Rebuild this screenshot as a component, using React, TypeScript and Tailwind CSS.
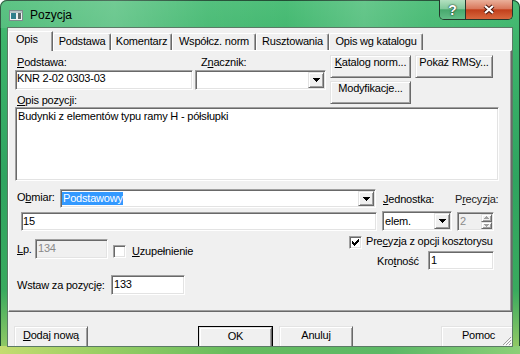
import React from "react";

const sunken =
  "border border-t-[#a0a0a0] border-l-[#a0a0a0] border-r-white border-b-white shadow-[inset_1px_1px_0_#696969,inset_-1px_-1px_0_#e3e3e3]";
const raised =
  "bg-[#f0f0f0] border border-t-[#e3e3e3] border-l-[#e3e3e3] border-r-[#696969] border-b-[#696969] shadow-[inset_1px_1px_0_#ffffff,inset_-1px_-1px_0_#a0a0a0]";

function U({ children }: { children: React.ReactNode }) {
  return <span className="underline underline-offset-1">{children}</span>;
}

function Arrow({ color = "#000" }: { color?: string }) {
  return (
    <svg width="7" height="4" viewBox="0 0 7 4">
      <path d="M0 0H7V1H6V2H5V3H4V4H3V3H2V2H1V1H0Z" fill={color} />
    </svg>
  );
}

function Combo({ className, children }: { className: string; children?: React.ReactNode }) {
  return (
    <div className={`${sunken} bg-white flex items-stretch p-px ${className}`}>
      <div className="flex-1 min-w-0 flex items-start">{children}</div>
      <div className={`${raised} w-[16px] flex items-center justify-center`}>
        <Arrow />
      </div>
    </div>
  );
}

function Btn({
  className,
  isDefault,
  children,
}: {
  className: string;
  isDefault?: boolean;
  children: React.ReactNode;
}) {
  if (isDefault) {
    return (
      <div className={`h-[23px] shrink-0 border border-black ${className}`}>
        <div className={`${raised} h-full flex justify-center items-start pt-px`}>{children}</div>
      </div>
    );
  }
  return (
    <div className={`${raised} h-[23px] shrink-0 flex justify-center items-start ${className}`}>
      {children}
    </div>
  );
}

function Check({ checked, className = "" }: { checked?: boolean; className?: string }) {
  return (
    <div className={`${sunken} bg-white w-[13px] h-[13px] shrink-0 flex items-center justify-center ${className}`}>
      {checked && (
        <svg width="7" height="7" viewBox="0 0 7 7">
          <path
            d="M6 0H7V3H6V4H5V5H4V6H3V7H2V6H1V5H0V2H1V3H2V4H3V3H4V2H5V1H6Z"
            fill="#000"
          />
        </svg>
      )}
    </div>
  );
}

export default function App() {
  return (
    <div className="w-[520px] h-[354px] relative overflow-hidden rounded-t-[7px] flex flex-col font-['Liberation_Sans',Arial,sans-serif] text-[11px] leading-[13px] tracking-[-0.2px] text-black bg-[linear-gradient(180deg,#4abd76_0%,#3db46b_12%,#2fa460_50%,#39aa5e_82%,#9ccd66_100%)] shadow-[inset_0_0_0_1px_#1d4a30]">
      {/* Title bar */}
      <div className="h-[28px] shrink-0 flex items-start bg-[linear-gradient(90deg,rgba(255,255,255,0.10)_0%,rgba(255,255,255,0.22)_22%,rgba(255,255,255,0.06)_40%,rgba(255,255,255,0.02)_55%,rgba(255,255,255,0.16)_70%,rgba(255,255,255,0.05)_82%,rgba(255,255,255,0)_100%)]">
        <svg className="ml-[9px] mt-[10px]" width="14" height="11" viewBox="0 0 14 11">
          <rect x="0.5" y="0.5" width="13" height="10" fill="#eef2f2" stroke="#7d8c8c" />
          <rect x="1" y="1" width="12" height="2" fill="#b6c4c6" />
          <rect x="2" y="3" width="5" height="6" fill="#2f7f8c" />
          <rect x="9" y="3" width="3" height="6" fill="#5a6a6a" />
        </svg>
        <span className="ml-[7px] mt-[8px] text-[12px] leading-[14px] tracking-normal text-black">Pozycja</span>
        <div className="ml-auto mr-[7px] flex h-[20px] rounded-b-[5px] border border-t-0 border-[#24372c] overflow-hidden">
          <div className="w-[26px] border-r border-[#24372c] bg-[linear-gradient(180deg,#b2e0c0_0%,#83c99c_45%,#48a96e_52%,#62bd86_100%)] flex items-center justify-center text-white font-bold text-[14px] leading-[14px] [text-shadow:0_0_2px_#17301f,0_0_1px_#17301f]">
            ?
          </div>
          <div className="w-[46px] bg-[linear-gradient(180deg,#eab09a_0%,#d9785c_45%,#c2401c_52%,#d9683e_100%)] flex items-center justify-center">
            <svg width="16" height="13" viewBox="0 0 16 13">
              <path d="M4 3L12 10M12 3L4 10" stroke="#4a170c" strokeWidth="4.2" />
              <path d="M4 3L12 10M12 3L4 10" stroke="#ffffff" strokeWidth="2.2" />
            </svg>
          </div>
        </div>
      </div>

      {/* Client area */}
      <div className="ml-[8px] w-[504px] h-[318px] shrink-0 bg-[#f0f0f0] flex flex-col overflow-hidden relative shadow-[0_0_0_1px_#5b7a66]">
        {/* Tabs */}
        <div className="h-[22px] shrink-0 flex items-end relative z-10">
          <div className="w-[45px] h-[20px] -mb-px bg-[#f0f0f0] border-l border-t border-white border-r border-r-[#696969] rounded-tl-[2px] shadow-[inset_-1px_0_0_#a0a0a0] pl-[7px] pt-px">
            Opis
          </div>
          <div className="w-[58px] h-[17px] border-t border-l border-white border-r border-r-[#696969] rounded-t-[2px] shadow-[inset_-1px_0_0_#a0a0a0] flex justify-center pt-px">
            Podstawa
          </div>
          <div className="w-[61px] h-[17px] border-t border-l border-white border-r border-r-[#696969] rounded-t-[2px] shadow-[inset_-1px_0_0_#a0a0a0] flex justify-center pt-px">
            Komentarz
          </div>
          <div className="w-[84px] h-[17px] border-t border-l border-white border-r border-r-[#696969] rounded-t-[2px] shadow-[inset_-1px_0_0_#a0a0a0] flex justify-center pt-px">
            Współcz. norm
          </div>
          <div className="w-[73px] h-[17px] border-t border-l border-white border-r border-r-[#696969] rounded-t-[2px] shadow-[inset_-1px_0_0_#a0a0a0] flex justify-center pt-px">
            Rusztowania
          </div>
          <div className="w-[94px] h-[17px] border-t border-l border-white border-r border-r-[#696969] rounded-t-[2px] shadow-[inset_-1px_0_0_#a0a0a0] flex justify-center pt-px">
            Opis wg katalogu
          </div>
        </div>

        {/* Tab panel */}
        <div className="h-[262px] shrink-0 border-l border-t border-white border-r border-b border-r-[#696969] border-b-[#696969] shadow-[inset_-1px_-1px_0_#a0a0a0] flex flex-col">
          {/* Podstawa / Znacznik / buttons */}
          <div className="mt-[4px] flex items-start">
            <div className="ml-[6px] flex flex-col">
              <div className="flex">
                <div className="w-[178px] flex flex-col">
                  <div className="h-[15px] pl-[2px] pt-px">
                    <U>P</U>odstawa:
                  </div>
                  <div className={`${sunken} bg-white h-[20px] pl-px pt-px`}>KNR 2-02 0303-03</div>
                </div>
                <div className="ml-[2px] w-[131px] flex flex-col">
                  <div className="h-[15px] pl-[6px] pt-px">
                    Z<U>n</U>acznik:
                  </div>
                  <Combo className="w-[131px] h-[20px]" />
                </div>
              </div>
              <div className="mt-[4px] h-[13px] pl-[2px]">
                <U>O</U>pis pozycji:
              </div>
            </div>
            <div className="ml-[4px] flex flex-col">
              <div className="flex gap-[4px]">
                <Btn className="w-[81px]">
                  <span>
                    <U>K</U>atalog norm...
                  </span>
                </Btn>
                <Btn className="w-[78px]">Pokaż RMSy...</Btn>
              </div>
              <Btn className="mt-[3px] w-[81px]">Modyfikacje...</Btn>
            </div>
          </div>

          {/* Opis pozycji */}
          <div className={`${sunken} bg-white ml-[6px] w-[484px] h-[74px] pl-[2px] pt-[2px]`}>
            Budynki z elementów typu ramy H - półsłupki
          </div>

          {/* Obmiar row */}
          <div className="mt-[8px] flex items-start">
            <div className="ml-[8px] w-[43px] pt-[2px]">
              O<U>b</U>miar:
            </div>
            <Combo className="w-[316px] h-[19px]">
              <span className="mt-px h-[13px] bg-[#3399ff] text-white pl-px">Podstawowy</span>
            </Combo>
            <div className="ml-[7px] w-[72px] mt-[4px]">
              <U>J</U>ednostka:
            </div>
            <div className="mt-[4px] text-[#222]">
              P<U>r</U>ecyzja:
            </div>
          </div>

          <div className="mt-[3px] flex items-start">
            <div className={`${sunken} bg-white ml-[12px] mt-px w-[356px] h-[19px] pl-px pt-[2px]`}>15</div>
            <Combo className="ml-[5px] w-[70px] h-[20px]">
              <span className="pl-px pt-[2px]">elem.</span>
            </Combo>
            <div className={`${sunken} bg-[#f0f0f0] ml-[5px] mt-px w-[37px] h-[19px] flex p-px`}>
              <div className="flex-1 pl-px pt-px text-[#8a8a8a]">2</div>
              <div className="w-[11px] flex flex-col">
                <div className={`${raised} flex-1 flex items-center justify-center`}>
                  <svg width="5" height="3" viewBox="0 0 5 3">
                    <path d="M2 0H3V1H4V2H5V3H0V2H1V1H2Z" fill="#a0a0a0" />
                  </svg>
                </div>
                <div className={`${raised} flex-1 flex items-center justify-center`}>
                  <svg width="5" height="3" viewBox="0 0 5 3">
                    <path d="M0 0H5V1H4V2H3V3H2V2H1V1H0Z" fill="#a0a0a0" />
                  </svg>
                </div>
              </div>
            </div>
          </div>

          {/* Lp / checkboxes / Krotność */}
          <div className="mt-[5px] flex items-start">
            <div className="w-[340px] flex items-start">
              <div className="ml-[8px] w-[18px] mt-[7px]">
                <U>L</U>p.
              </div>
              <div className={`${sunken} bg-[#f0f0f0] mt-[3px] w-[73px] h-[20px] pl-[2px] pt-[2px] text-[#8a8a8a]`}>
                134
              </div>
              <Check className="ml-[5px] mt-[9px]" />
              <div className="ml-[6px] mt-[9px]">
                <U>U</U>zupełnienie
              </div>
            </div>
            <div className="flex flex-col">
              <div className="flex items-start">
                <Check checked />
                <div className="ml-[4px] -mt-px">
                  Pre<U>c</U>yzja z opcji kosztorysu
                </div>
              </div>
              <div className="mt-[2px] flex items-start">
                <div className="ml-[28px] w-[51px] mt-[4px]">
                  Kro<U>t</U>ność
                </div>
                <div className={`${sunken} bg-white w-[66px] h-[19px] pl-[2px] pt-[2px]`}>1</div>
              </div>
            </div>
          </div>

          {/* Wstaw za pozycję */}
          <div className="mt-[5px] flex items-start">
            <div className="ml-[8px] w-[94px] mt-[4px]">Wstaw za pozycję:</div>
            <div className={`${sunken} bg-white w-[74px] h-[20px] pl-[2px] pt-[2px]`}>133</div>
          </div>
        </div>

        {/* Bottom buttons */}
        <div className="flex items-start">
          <Btn className="mt-[14px] ml-[6px] w-[74px] pt-[2px]">
            <span>
              <U>D</U>odaj nową
            </span>
          </Btn>
          <Btn isDefault className="mt-[14px] ml-[110px] w-[75px]">
            <span className="pt-px">OK</span>
          </Btn>
          <Btn className="mt-[14px] ml-[6px] w-[74px] pt-[2px]">Anuluj</Btn>
          <Btn className="mt-[14px] ml-[88px] w-[75px] pt-[2px]">Pomoc</Btn>
        </div>

        {/* Size grip */}
        <svg className="absolute right-0 bottom-0" width="10" height="10" viewBox="0 0 10 10">
          <path d="M9 1L1 9M9 4L4 9M9 7L7 9" stroke="#a0a0a0" strokeWidth="1" />
          <path d="M10 2L2 10M10 5L5 10M10 8L8 10" stroke="#ffffff" strokeWidth="1" />
        </svg>
      </div>

      {/* Bottom frame */}
      <div className="flex-1 bg-[linear-gradient(90deg,#c4dc70_0%,#9ccf64_18%,#66bb5e_45%,#5cb866_75%,#8ccf78_100%)]" />
    </div>
  );
}
